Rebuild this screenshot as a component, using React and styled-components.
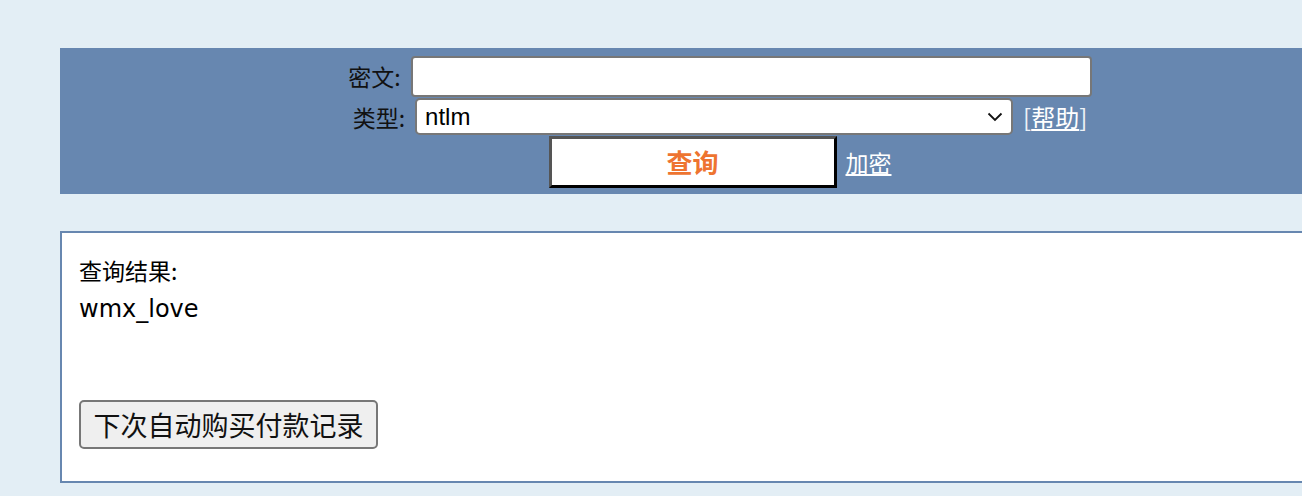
import React, { useState } from 'react'
import styled, { createGlobalStyle } from 'styled-components'

const GlobalStyle = createGlobalStyle`
    html, body {
        margin: 0;
        padding: 0;
        background: #e3eef5;
        overflow: hidden;
    }
    body {
        font-family: "DejaVu Sans", "Noto Sans CJK SC", sans-serif;
        color: #000;
    }
`

const Page = styled.div`
    padding: 48px 0 0 60px;
    width: 1320px;
`

const SearchPanel = styled.form`
    background: #6787b0;
    height: 146px;
    box-sizing: border-box;
    padding-top: 7px;
    display: flex;
    flex-direction: column;
    align-items: center;
`

const Row = styled.div`
    display: flex;
    align-items: center;
    justify-content: center;
    gap: ${(props) => props.gap || 10}px;
    height: ${(props) => props.h}px;
    margin-top: ${(props) => props.mt || 0}px;
`

const Label = styled.label`
    font-family: "Noto Sans CJK SC", sans-serif;
    font-size: 23px;
    color: #111;
`

const TextInput = styled.input`
    width: 681px;
    height: 41px;
    box-sizing: border-box;
    border: 2px solid #777;
    border-radius: 4px;
    background: #fff;
    outline: none;
`

const SelectBox = styled.div`
    position: relative;
    width: 598px;
    height: 37px;
    box-sizing: border-box;
    border: 2px solid #777;
    border-radius: 5px;
    background: #fff;
    display: flex;
    align-items: center;
    padding-left: 8px;
    font-family: "Liberation Sans", "Noto Sans CJK SC", sans-serif;
    font-size: 24px;
    select {
        position: absolute;
        inset: 0;
        opacity: 0;
    }
    svg {
        position: absolute;
        right: 8px;
        top: 50%;
        transform: translateY(-50%);
    }
`

const Bracket = styled.span`
    font-family: "Noto Sans CJK SC", sans-serif;
    font-size: 24px;
    color: #eef2f8;
    a {
        color: #fff;
        text-decoration: underline;
    }
`

const QueryButton = styled.button`
    width: 288px;
    height: 52px;
    box-sizing: border-box;
    background: #fff;
    border-style: solid;
    border-width: 3px;
    border-color: #555 #000 #000 #555;
    color: #ee7430;
    font-family: "Noto Sans CJK SC", sans-serif;
    font-weight: bold;
    font-size: 26px;
    padding: 0;
    cursor: pointer;
`

const PlainLink = styled.a`
    font-family: "Noto Sans CJK SC", sans-serif;
    font-size: 23px;
    color: #fff;
    text-decoration: underline;
`

const ResultBox = styled.div`
    margin-top: 37px;
    height: 252px;
    box-sizing: border-box;
    background: #fff;
    border: 2px solid #6787b0;
    padding: 19px 0 0 17px;
`

const ResultLine = styled.div`
    font-size: ${(props) => props.size || 22}px;
    line-height: 37px;
    margin-top: ${(props) => props.mt || 0}px;
    font-family: ${(props) => props.latin ? '"DejaVu Sans", "Noto Sans CJK SC", sans-serif' : '"Noto Sans CJK SC", sans-serif'};
`

const HistoryButton = styled.button`
    margin-top: 72px;
    width: 299px;
    height: 49px;
    box-sizing: border-box;
    background: #efefef;
    border: 2px solid #777;
    border-radius: 5px;
    font-family: "Noto Sans CJK SC", sans-serif;
    font-size: 27px;
    color: #111;
    padding: 0;
`

const Chevron = () => (
    <svg width="16" height="10" viewBox="0 0 16 10">
        <path d="M1.5 1.5 L8 8 L14.5 1.5" fill="none" stroke="#111" strokeWidth="1.8" />
    </svg>
)

export default function App() {
    const [hash, setHash] = useState('')
    const [type, setType] = useState('ntlm')

    return (
        <Page>
            <GlobalStyle />
            <SearchPanel onSubmit={(e) => e.preventDefault()}>
                <Row h={42} gap={10}>
                    <Label>密文:</Label>
                    <TextInput value={hash} onChange={(e) => setHash(e.target.value)} />
                </Row>
                <Row h={37} mt={1} gap={10}>
                    <Label>类型:</Label>
                    <SelectBox>
                        {type}
                        <select value={type} onChange={(e) => setType(e.target.value)}>
                            <option value="ntlm">ntlm</option>
                            <option value="md5">md5</option>
                            <option value="sha1">sha1</option>
                        </select>
                        <Chevron />
                    </SelectBox>
                    <Bracket>[<a href="#">帮助</a>]</Bracket>
                </Row>
                <Row h={53} gap={9}>
                    <QueryButton type="submit">查询</QueryButton>
                    <PlainLink href="#">加密</PlainLink>
                </Row>
            </SearchPanel>
            <ResultBox>
                <ResultLine size={23}>查询结果:</ResultLine>
                <ResultLine size={24} mt={2} latin>wmx_love</ResultLine>
                <HistoryButton>下次自动购买付款记录</HistoryButton>
            </ResultBox>
        </Page>
    )
}
